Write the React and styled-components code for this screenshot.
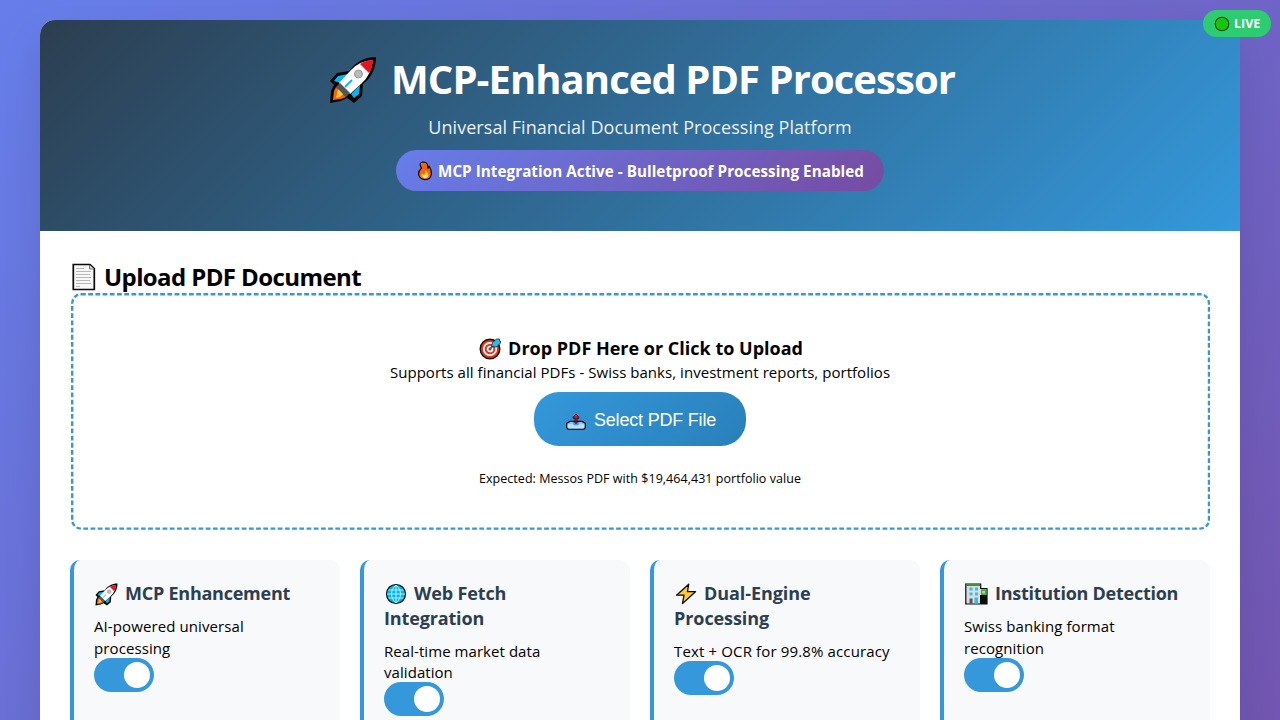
import React from "react";
import styled, { createGlobalStyle } from "styled-components";

const Global = createGlobalStyle`
  *, *::before { margin: 0; padding: 0; box-sizing: border-box; }
  html, body { height: 720px; overflow: hidden; }
  body { font-family: "Open Sans", "Noto Sans", sans-serif; color: #000; }
`;

const Page = styled.div`
  position: relative;
  height: 720px;
  overflow: hidden;
  padding: 20px 40px 0;
  background: linear-gradient(135deg, #667eea 0%, #764ba2 100%) 0 0 / 1280px 1250px no-repeat;
`;

const LiveBadge = styled.div`
  position: absolute;
  top: 10px;
  right: 9.5px;
  width: 67.5px;
  height: 27px;
  padding: 1px 0 0 11px;
  display: flex;
  align-items: center;
  gap: 4px;
  border-radius: 14px;
  background: #2ecc71;
  color: #fff;
  z-index: 2;
`;

const Container = styled.main`
  height: 1200px;
  border-radius: 15px;
  background: #fff;
  overflow: hidden;
  box-shadow: 0 20px 40px rgba(0, 0, 0, 0.1);
`;

const Header = styled.header`
  height: 211px;
  padding-top: 30px;
  display: flex;
  flex-direction: column;
  align-items: center;
  background: linear-gradient(135deg, #2c3e50 0%, #3498db 100%);
  color: #fff;
`;

const Text = styled.span`
  display: block;
  white-space: nowrap;
  font-size: ${(p) => p.$size}px;
  font-weight: ${(p) => p.$weight || 400};
  line-height: ${(p) => p.$line || p.$size * 1.33}px;
  letter-spacing: ${(p) => p.$track || 0}px;
`;

const Title = styled.h1`
  display: flex;
  align-items: center;
  gap: 14px;
  height: 60px;
  padding-left: 4px;

  ${Text} {
    padding-bottom: 2px;
  }
`;

const Subtitle = styled.p`
  margin-top: 6px;
  opacity: 0.9;
`;

const StatusPill = styled.div`
  margin-top: 10px;
  width: 488px;
  height: 41px;
  padding: 2px 0 0 21px;
  display: flex;
  align-items: center;
  gap: 5px;
  border-radius: 20.5px;
  background: linear-gradient(135deg, #667eea 0%, #764ba2 100%);
`;

const Content = styled.div`
  padding: 30px;
`;

const SectionTitle = styled.h2`
  height: 32px;
  padding: 0 0 0 2px;
  display: flex;
  align-items: center;
  gap: 8px;
`;

const DropArea = styled.section`
  position: relative;
  height: 237px;
  padding-top: 43px;
  display: flex;
  flex-direction: column;
  align-items: center;

  &::before {
    content: "";
    position: absolute;
    top: 0.3px;
    left: 0.6px;
    width: calc((100% - 0.6px) * 1.25);
    height: calc((100% - 0.6px) * 1.25);
    border: 3px dashed #3498db;
    border-radius: 12.5px;
    transform: scale(0.8);
    transform-origin: 0 0;
    pointer-events: none;
  }
`;

const DropTitle = styled.h3`
  height: 26px;
  padding-left: 2px;
  display: flex;
  align-items: center;
  gap: 6px;
`;

const SelectButton = styled.button`
  margin: 9px 0 22px;
  width: 212px;
  height: 54px;
  padding: 4px 0 0 32px;
  display: flex;
  align-items: center;
  gap: 8px;
  border: 0;
  border-radius: 25px;
  background: linear-gradient(135deg, #3498db 0%, #2980b9 100%);
  color: #fff;
  font-family: "Liberation Sans", Arial, sans-serif;
`;

const Grid = styled.div`
  margin-top: 30px;
  display: grid;
  grid-template-columns: repeat(4, 1fr);
  gap: 20px;
`;

const Card = styled.article`
  height: 200px;
  padding: 21px 20px 20px;
  border-left: 4px solid #3498db;
  border-radius: 10px;
  background: #f8f9fb;
`;

const CardTitle = styled.h3`
  margin-bottom: 8.9px;
  color: #2c3e50;
`;

const CardLine = styled.div`
  display: flex;
  align-items: center;
  gap: 7px;
  height: ${(p) => p.$h}px;
  padding: ${(p) => p.$drop || 0}px 0 0 ${(p) => p.$indent || 0}px;
`;

const Toggle = styled.div`
  width: 60px;
  height: 34px;
  margin-top: -0.8px;
  padding: 4px;
  display: flex;
  justify-content: flex-end;
  border-radius: 17px;
  background: #3498db;
`;

const Knob = styled.span`
  width: 26px;
  height: 26px;
  border-radius: 50%;
  background: #fff;
`;

const Svg = styled.svg`
  display: block;
  flex: none;
`;

const Rocket = ({ size }) => (
  <Svg width={size} height={size} viewBox="0 0 48 48">
    <path d="M47 1C35 1 27 6 20 15L8 17 1 25 5 29 2 35 1 47 12 45 18 42 25 47 33 40 34 28C42 22 47 13 47 1Z" fill="#050505" />
    <path d="M19 18 9 20 5 25 12 27ZM22 38 25 42 30 38 31 29Z" fill="#00b7f1" />
    <path d="M44 4Q30 5 22 14L10 27 21 38 33 27Q42 19 44 4Z" fill="#fff" />
    <path d="M44 4Q37 4 31 8L40 17Q44 11 44 4Z" fill="#e81224" />
    <path d="M11 27 21 37 17 41 7 31Z" fill="#555" />
    <path d="M7 31 17 41 12 43 4 44 5 35Z" fill="#f7630c" />
    <path d="M9 33 14 38 11 41 7 42Z" fill="#ffc83d" />
    <circle cx="29.5" cy="18" r="4" fill="#bbb" stroke="#999" />
    <path d="m16 31 7-7" stroke="#00b7f1" strokeWidth="1.8" />
  </Svg>
);

const Flame = () => (
  <Svg width="16" height="20" viewBox="0 0 16 20">
    <path d="M3.5 5Q2 1.5 6 1Q10 1 10.6 4L11 7 12.3 5.5Q14.5 9 14.5 12.5 14 18.6 8 18.7 2 18 1.5 13 1.3 10 4.5 7Z" fill="#f7630c" stroke="#090909" strokeWidth="1.2" />
    <path d="M8 9Q12 12 11.5 15.5 8 19 4.5 15.5 3.8 13.5 5.5 12.5L7 14Q9 12 8 9Z" fill="#ffc83d" />
    <path d="M6.5 15 9.5 14Q10 18 7 17Z" fill="#fff6bd" />
  </Svg>
);

const PageIcon = () => (
  <Svg width="24" height="28" viewBox="0 0 24 28">
    <path d="M1.3 1.5H18L22.3 5.5V26.5H1.3Z" fill="#f8f8f8" stroke="#090909" strokeWidth="1.7" />
    <path d="M17.5 2V6H22" fill="#ddd" stroke="#777" />
    <path d="M4 5.5h8M4 8.5h15M4 11.5h14M4 14.5h15M4 17.5h14M4 20.5h15M4 23.5h4" stroke="#b8b8b8" />
  </Svg>
);

const Target = () => (
  <Svg width="23" height="22" viewBox="0 0 23 22">
    <circle cx="11" cy="11" r="9.8" fill="#e8331c" stroke="#111" strokeWidth="1.4" />
    <circle cx="11" cy="11" r="6.2" fill="none" stroke="#fff" strokeWidth="1.7" />
    <circle cx="11" cy="11" r="2.5" fill="none" stroke="#fff" strokeWidth="1.7" />
    <path d="M11 11 16 6" stroke="#0675b5" strokeWidth="1.6" />
    <path d="M12.5 8.5 13.5 4.5 17.5 1H20.5V3H21.5V5L17.5 9Z" fill="#28bcef" stroke="#111" strokeWidth=".7" />
  </Svg>
);

const Outbox = () => (
  <Svg width="20" height="17" viewBox="0 0 20 17">
    <path d="M4 8.4 16 8.4 19.2 10.2V14.8L17.8 16.2H2.2L.8 14.8V10.2Z" fill="#8cc5f0" stroke="#080808" strokeWidth="1.3" strokeLinejoin="round" />
    <path d="M1.6 11.2H6.5L8.5 12.2H11.5L13.5 11.2H18.4V14.5L17.4 15.5H2.6L1.6 14.5Z" fill="#bfdff8" />
    <path d="M7 9.2H13V11L12 12.2H8L7 11Z" fill="#3f9fec" />
    <path d="M10 1 13.2 4.6 12 5.7 11 5V10H9V5L8 5.7 6.8 4.6Z" fill="#e81224" stroke="#111" strokeWidth=".9" />
  </Svg>
);

const Globe = () => (
  <Svg width="22" height="22" viewBox="0 0 22 22">
    <circle cx="11" cy="11" r="9.5" fill="#00b7f1" stroke="#080808" strokeWidth="1.2" />
    <path d="M2 11H20M3.5 7H18.5M3.5 15H18.5M11 2V20M11 2C5 7 5 15 11 20M11 2C17 7 17 15 11 20" fill="none" stroke="#c9f3ff" strokeWidth=".9" />
  </Svg>
);

const Bolt = () => (
  <Svg width="22" height="22" viewBox="0 0 22 22">
    <path d="M13.7 1.2 1.5 12.2H9L7.5 20.5 20.5 8.7H12.5Z" fill="#ffc83d" stroke="#0b0b0b" strokeWidth="1.3" strokeLinejoin="round" />
  </Svg>
);

const Building = () => (
  <Svg width="23" height="22" viewBox="0 0 23 22">
    <path d="M.8 1H15.7V5.5H22V21H.8Z" fill="#ddd" stroke="#080808" strokeWidth="1.2" />
    <path d="M1.4 1.5H15.2V3H1.4Z" fill="#16a51d" />
    <path d="M16 6.2H21.4V12H16Z" fill="#3fae38" />
    <path d="M15 12H22V21H15Z" fill="#0c0c0c" />
    <path d="M4.5 4.5h3v3h-3ZM10 4.5h3v3h-3ZM4.5 9.5h3v3h-3ZM10 9.5h3v3h-3ZM9.5 14.5h3.5V20.5H9.5Z" fill="#22c5ee" />
    <path d="M4.5 15.5h3v5h-3Z" fill="#555" />
    <path d="M17.2 8h2.8v2.4h-2.8Z" fill="#a6e3a1" />
  </Svg>
);

const Dot = () => (
  <Svg width="16" height="16" viewBox="0 0 16 16">
    <circle cx="8" cy="8" r="6.8" fill="#16c60c" stroke="#0c3c0c" strokeWidth="1.1" />
  </Svg>
);

const cards = [
  { icon: <Rocket size={23} />, title: ["MCP Enhancement"], track: -0.24, body: ["AI-powered universal", "processing"], bodyTrack: 0.1, secondDrop: 2 },
  { icon: <Globe />, title: ["Web Fetch", "Integration"], track: -0.15, body: ["Real-time market data", "validation"], bodyTrack: 0.06, secondDrop: 0.8 },
  { icon: <Bolt />, title: ["Dual-Engine", "Processing"], track: -0.08, body: ["Text + OCR for 99.8% accuracy"], bodyTrack: 0.14 },
  { icon: <Building />, title: ["Institution Detection"], track: -0.26, body: ["Swiss banking format", "recognition"], bodyTrack: 0.07, secondDrop: 2 },
];

export default function App() {
  return (
    <>
      <Global />
      <Page>
        <LiveBadge><Dot /><Text $size={12.5} $weight={700}>LIVE</Text></LiveBadge>
        <Container>
          <Header>
            <Title><Rocket size={48} /><Text $size={40} $weight={700} $track={-0.95} $line={52}>MCP-Enhanced PDF Processor</Text></Title>
            <Subtitle><Text $size={18} $track={0.04}>Universal Financial Document Processing Platform</Text></Subtitle>
            <StatusPill><Flame /><Text $size={15.2} $weight={700} $track={0.06}>MCP Integration Active - Bulletproof Processing Enabled</Text></StatusPill>
          </Header>
          <Content>
            <SectionTitle><PageIcon /><Text $size={24} $weight={700} $track={-0.6}>Upload PDF Document</Text></SectionTitle>
            <DropArea>
              <DropTitle><Target /><Text $size={18} $weight={700}>Drop PDF Here or Click to Upload</Text></DropTitle>
              <Text $size={15} $line={21} $track={0.04}>Supports all financial PDFs - Swiss banks, investment reports, portfolios</Text>
              <SelectButton><Outbox /><Text $size={18} $track={-0.2}>Select PDF File</Text></SelectButton>
              <Text $size={12.5} $line={22} $track={0.04}>Expected: Messos PDF with $19,464,431 portfolio value</Text>
            </DropArea>
            <Grid>
              {cards.map((c) => (
                <Card key={c.title[0]}>
                  <CardTitle>
                    {c.title.map((t, i) => (
                      <CardLine key={t} $h={i ? 24.6 : 26} $indent={i ? 0 : 1}>
                        {i === 0 && c.icon}
                        <Text $size={18} $weight={700} $track={c.track}>{t}</Text>
                      </CardLine>
                    ))}
                  </CardTitle>
                  {c.body.map((t, i) => (
                    <CardLine key={t} $h={21.3} $drop={i ? c.secondDrop : 0.8}><Text $size={15} $track={c.bodyTrack}>{t}</Text></CardLine>
                  ))}
                  <Toggle><Knob /></Toggle>
                </Card>
              ))}
            </Grid>
          </Content>
        </Container>
      </Page>
    </>
  );
}
